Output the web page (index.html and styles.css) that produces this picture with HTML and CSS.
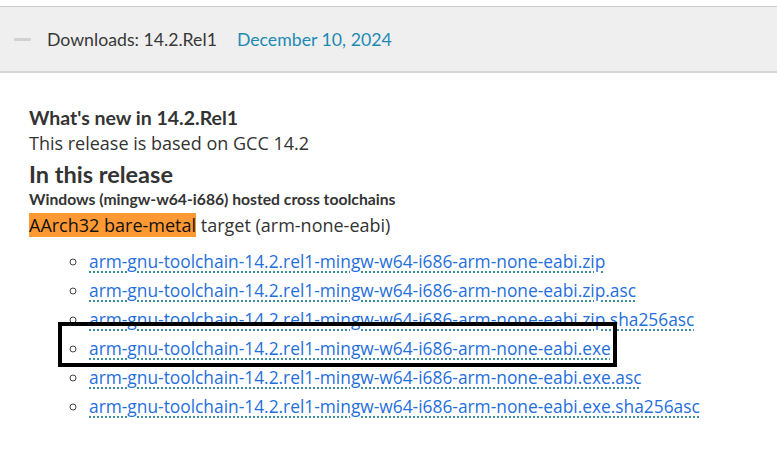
FILE: index.html
```html
<!DOCTYPE html>
<html>
<head>
<meta charset="utf-8">
<link rel="stylesheet" href="styles.css">
</head>
<body>
<div class="page">
  <div class="accordion-head">
    <span class="minus"></span>
    <span class="title">Downloads: 14.2.Rel1</span>
    <span class="date">December 10, 2024</span>
  </div>
  <div class="content">
    <h3 class="whats-new">What's new in 14.2.Rel1</h3>
    <p class="based">This release is based on GCC 14.2</p>
    <h2 class="in-release">In this release</h2>
    <h4 class="host">Windows (mingw-w64-i686) hosted cross toolchains</h4>
    <p class="target"><span class="mark">AArch32 bare-metal</span> target (arm-none-eabi)</p>
    <ul class="files">
      <li><a href="#">arm-gnu-toolchain-14.2.rel1-mingw-w64-i686-arm-none-eabi.zip</a></li>
      <li><a href="#">arm-gnu-toolchain-14.2.rel1-mingw-w64-i686-arm-none-eabi.zip.asc</a></li>
      <li><a href="#">arm-gnu-toolchain-14.2.rel1-mingw-w64-i686-arm-none-eabi.zip.sha256asc</a></li>
      <li class="highlight"><a href="#">arm-gnu-toolchain-14.2.rel1-mingw-w64-i686-arm-none-eabi.exe</a></li>
      <li><a href="#">arm-gnu-toolchain-14.2.rel1-mingw-w64-i686-arm-none-eabi.exe.asc</a></li>
      <li><a href="#">arm-gnu-toolchain-14.2.rel1-mingw-w64-i686-arm-none-eabi.exe.sha256asc</a></li>
    </ul>
  </div>
</div>
</body>
</html>
```
FILE: styles.css
```css
html, body {
  margin: 0;
  padding: 0;
  background: #ffffff;
}
.page {
  padding-top: 6px;
  font-family: Lato, "Open Sans", sans-serif;
  color: #333333;
}
.accordion-head {
  display: flex;
  align-items: center;
  height: 64px;
  background: #efefef;
  border-top: 1px solid #c8c8c8;
  border-bottom: 2px solid #d6d6d6;
  padding-left: 14px;
  font-size: 17.7px;
}
.minus {
  width: 17px;
  height: 3px;
  background: #d2d2d2;
  border-radius: 1px;
  margin-right: 16px;
}
.title {
  color: #383838;
  margin-right: 20px;
}
.date {
  color: #1e8ab4;
}
.content {
  padding: 0 0 0 29px;
}
.whats-new {
  margin: 32px 0 0;
  font-size: 19.5px;
  line-height: 26px;
  font-weight: 700;
  color: #333333;
}
.based {
  margin: 0;
  font-family: "Open Sans", sans-serif;
  font-size: 18px;
  line-height: 24px;
  color: #333333;
}
.in-release {
  margin: 5px 0 0;
  font-size: 23.5px;
  line-height: 28px;
  font-weight: 700;
  color: #333333;
}
.host {
  margin: 2px 0 0;
  font-size: 15.7px;
  line-height: 18px;
  font-weight: 700;
  color: #333333;
}
.target {
  margin: 5px 0 0;
  font-family: "Open Sans", sans-serif;
  font-size: 18px;
  line-height: 25px;
  color: #333333;
}
.mark {
  background: #ff9933;
  color: #111111;
}
.files {
  margin: 9px 0 0;
  padding: 0 0 0 60px;
  list-style: circle;
  font-family: "Open Sans", sans-serif;
  font-size: 17.35px;
  line-height: 29px;
}
.files li::marker {
  color: #444444;
}
.files a {
  color: #1f6fdc;
  text-decoration: underline dotted #1d7d8c;
  text-underline-offset: 4px;
}
.files li.highlight {
  position: relative;
}
.files li.highlight::after {
  content: "";
  position: absolute;
  left: -31px;
  top: -12px;
  width: 559px;
  height: 45px;
  box-sizing: border-box;
  border: 4px solid #000000;
}
```
